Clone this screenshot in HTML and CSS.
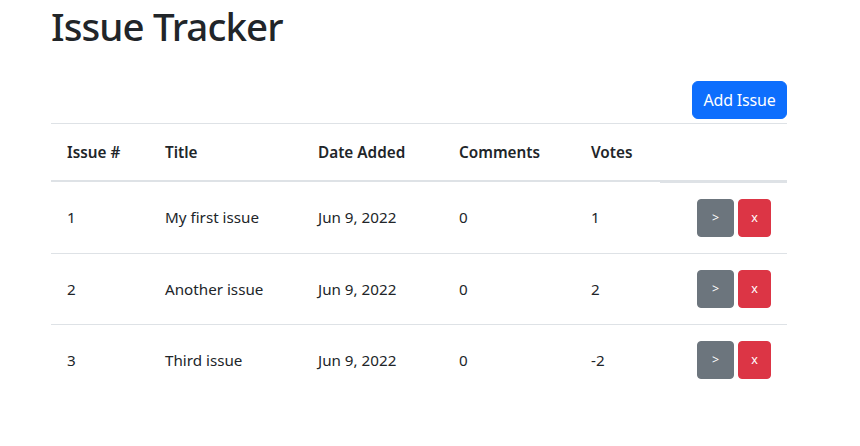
FILE: index.html
```html
<!DOCTYPE html>
<html lang="en">
<head>
<meta charset="utf-8">
<title>Issue Tracker</title>
<link rel="stylesheet" href="styles.css">
</head>
<body>
<div class="container">
  <h1 class="title">Issue Tracker</h1>
  <div class="toolbar">
    <button class="btn btn-primary">Add Issue</button>
  </div>
  <table class="table">
    <colgroup>
      <col class="c-num"><col class="c-title"><col class="c-date"><col class="c-comments"><col class="c-votes"><col class="c-actions">
    </colgroup>
    <thead>
      <tr>
        <th>Issue #</th>
        <th>Title</th>
        <th>Date Added</th>
        <th>Comments</th>
        <th>Votes</th>
        <th class="th-last"></th>
      </tr>
    </thead>
    <tbody>
      <tr>
        <td>1</td><td>My first issue</td><td>Jun 9, 2022</td><td>0</td><td>1</td>
        <td><div class="actions"><button class="btn btn-sq btn-secondary">&gt;</button><button class="btn btn-sq btn-danger">x</button></div></td>
      </tr>
      <tr>
        <td>2</td><td>Another issue</td><td>Jun 9, 2022</td><td>0</td><td>2</td>
        <td><div class="actions"><button class="btn btn-sq btn-secondary">&gt;</button><button class="btn btn-sq btn-danger">x</button></div></td>
      </tr>
      <tr>
        <td>3</td><td>Third issue</td><td>Jun 9, 2022</td><td>0</td><td>-2</td>
        <td><div class="actions"><button class="btn btn-sq btn-secondary">&gt;</button><button class="btn btn-sq btn-danger">x</button></div></td>
      </tr>
    </tbody>
  </table>
</div>
</body>
</html>
```
FILE: styles.css
```css
html, body {
  margin: 0;
  padding: 0;
  background: #fff;
}
body {
  font-family: "Noto Sans", "Open Sans", sans-serif;
  font-size: 16px;
  line-height: 1.5;
  color: #212529;
}
.container {
  width: 736px;
  margin-left: 51px;
}
.title {
  margin: 3px 0 0;
  font-size: 38.5px;
  font-weight: 500;
  line-height: 46px;
  letter-spacing: -0.9px;
  color: #212529;
}
.toolbar {
  display: flex;
  justify-content: flex-end;
  padding-top: 32px;
  margin-bottom: 4px;
}
.btn {
  font-family: inherit;
  font-size: 16px;
  line-height: 24px;
  border: 1px solid transparent;
  border-radius: 6px;
  padding: 6px 12px;
  color: #fff;
  cursor: pointer;
  margin: 0;
}
.btn-primary {
  background: #0d6efd;
  border-color: #0d6efd;
  width: 95px;
  height: 38px;
  padding: 6px 0;
  letter-spacing: -0.2px;
}
.btn-secondary {
  background: #6c757d;
  border-color: #6c757d;
}
.btn-danger {
  background: #dc3545;
  border-color: #dc3545;
}
.btn-sq {
  height: 38px;
  padding: 0;
  font-size: 12.5px;
  line-height: 36px;
  border-radius: 4px;
  text-align: center;
}
.btn-sq.btn-secondary { width: 37px; }
.btn-sq.btn-danger { width: 33px; }
.table {
  width: 736px;
  table-layout: fixed;
  border-collapse: collapse;
  border-top: 1px solid #dee2e6;
}
.c-num { width: 98px; }
.c-title { width: 153px; }
.c-date { width: 141px; }
.c-comments { width: 132px; }
.c-votes { width: 85px; }
.c-actions { width: 127px; }
.table th,
.table td {
  padding: 16px;
  text-align: left;
  vertical-align: middle;
  line-height: 24px;
}
.table th {
  font-weight: 600;
  font-size: 15.3px;
  border-bottom: 2px solid #dee2e6;
}
.table th.th-last {
  border-bottom: 3px solid #dee2e6;
}
.table td {
  font-size: 15.2px;
  border-bottom: 1px solid #dee2e6;
}
.table tbody tr:last-child td {
  border-bottom: none;
}
.actions {
  display: flex;
  justify-content: flex-end;
  gap: 4px;
}
```
